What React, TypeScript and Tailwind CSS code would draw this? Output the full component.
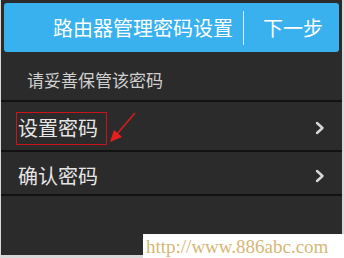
import React from "react";

const cjk = { fontFamily: '"Noto Sans CJK SC", "Noto Sans", sans-serif' };

function Chevron() {
  return (
    <svg width="10" height="14" viewBox="0 0 10 14" className="mr-[17px]">
      <path d="M2 2 L7.5 7 L2 12" fill="none" stroke="#d8d8d8" strokeWidth="2.4" strokeLinecap="round" strokeLinejoin="round" />
    </svg>
  );
}

export default function App() {
  return (
    <div className="relative w-[344px] h-[258px] overflow-hidden bg-[#d9d9d9]" style={cjk}>
      <div className="flex flex-col w-[341px] h-[255px] bg-[#2b2b2b] ml-[1px]">
        {/* Header */}
        <div className="mt-[3px] mx-[3px] h-[49px] rounded-[3px] bg-[#39b1ef] flex items-center justify-end text-white text-[20px] leading-none">
          <span>路由器管理密码设置</span>
          <div className="w-px h-[34px] bg-[#d7effc] mx-[10px]" />
          <span className="ml-[9px] mr-[16px]">下一步</span>
        </div>

        {/* hint */}
        <div className="h-[50px] flex items-center pt-[8px] pl-[26px] text-[17px] text-[#d0d0d0] border-b-2 border-[#121212]">
          请妥善保管该密码
        </div>

        <div className="h-[50px] flex items-center justify-between pt-[4px] pl-[17px] text-[20px] text-[#e6e6e6] border-b-2 border-[#121212]">
          <span>设置密码</span>
          <Chevron />
        </div>

        <div className="h-[44px] flex items-center justify-between pt-[6px] pl-[17px] text-[20px] text-[#e6e6e6] border-b-2 border-[#121212]">
          <span>确认密码</span>
          <Chevron />
        </div>
      </div>

      {/* annotation box */}
      <div className="absolute left-[16px] top-[112px] w-[91px] h-[33px] border-[1.5px] border-[#c8141a]" />

      {/* annotation arrow */}
      <svg className="absolute left-[105px] top-[108px]" width="40" height="40" viewBox="0 0 40 40">
        <line x1="30" y1="5" x2="12" y2="26" stroke="#d81c1c" strokeWidth="1.6" />
        <polygon points="5,34 9,22 17,29" fill="#e61e1e" />
      </svg>

      {/* watermark */}
      <div
        className="absolute left-[143px] top-[234px] w-[201px] h-[24px] bg-white flex items-center pl-[3px] text-[#d6b775] text-[19px] leading-none"
        style={{ fontFamily: '"Liberation Serif", serif' }}
      >
        http://www.886abc.com
      </div>
    </div>
  );
}
